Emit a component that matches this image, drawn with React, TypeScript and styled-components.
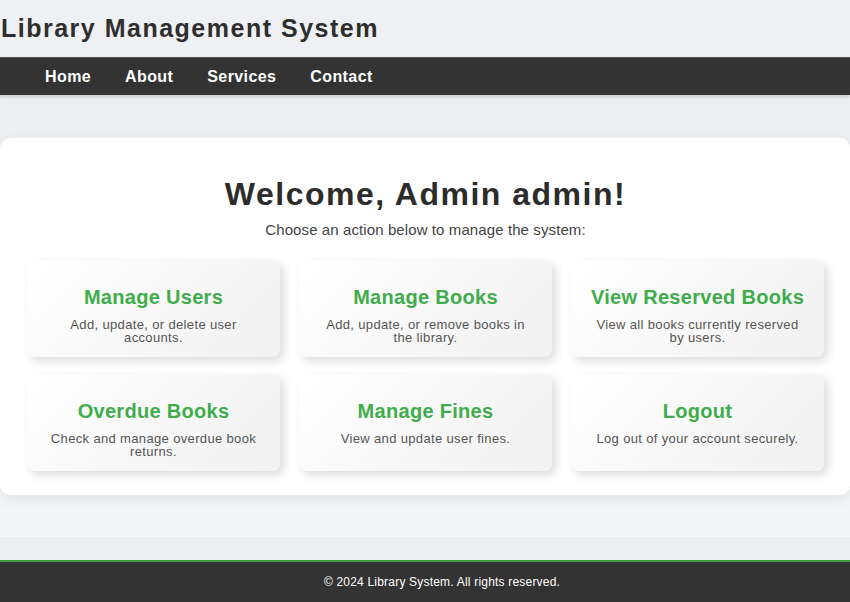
import React from "react";
import styled, { createGlobalStyle } from "styled-components";

const Global = createGlobalStyle`
  html, body { margin: 0; padding: 0; }
  body {
    font-family: "Liberation Sans", Arial, sans-serif;
    background: #eceef1;
    color: #333;
  }
`;

const Page = styled.div`
  display: flex;
  flex-direction: column;
  min-height: 602px;
`;

const Header = styled.header`
  background: #eef0f3;
`;

const SiteTitle = styled.h1`
  margin: 0;
  height: 57px;
  display: flex;
  align-items: center;
  font-size: 25px;
  letter-spacing: 1.5px;
  font-weight: 700;
  color: #2e2e2e;
  padding-left: 1px;
`;

const Nav = styled.nav`
  background: #333;
  height: 38px;
  border-top: 1px solid #555;
  box-sizing: border-box;
  display: flex;
  align-items: center;
  gap: 34px;
  padding-left: 45px;
  box-shadow: 0 2px 3px rgba(0, 0, 0, 0.15);
  position: relative;
  z-index: 1;
`;

const NavLink = styled.a`
  color: #fff;
  font-weight: 700;
  font-size: 16px;
  letter-spacing: 0.4px;
  text-decoration: none;
`;

const Main = styled.main`
  background: linear-gradient(to bottom, #eceef1, #f4f5f7);
  padding: 43px 0 42px;
`;

const Panel = styled.section`
  background: #fff;
  border-radius: 10px;
  box-shadow: 0 4px 14px rgba(0, 0, 0, 0.08);
  padding: 37px 26px 24px 27px;
  text-align: center;
`;

const Welcome = styled.h2`
  margin: 0;
  font-size: 32px;
  line-height: 38px;
  letter-spacing: 1.5px;
  font-weight: 700;
  color: #2c2c2c;
`;

const Intro = styled.p`
  margin: 8px 0 22px;
  font-size: 15px;
  letter-spacing: 0.1px;
  line-height: 17px;
  color: #444;
`;

const Grid = styled.div`
  display: grid;
  grid-template-columns: repeat(3, 1fr);
  gap: 17px 19px;
`;

const Card = styled.a`
  display: block;
  text-decoration: none;
  background: linear-gradient(135deg, #ffffff 0%, #f1f1f1 100%);
  border-radius: 8px;
  box-shadow: 4px 4px 10px rgba(0, 0, 0, 0.14);
  padding: 25px 16px 12px;
  min-height: 97px;
  box-sizing: border-box;
`;

const CardTitle = styled.h3`
  margin: 0 0 9px;
  font-size: 20px;
  letter-spacing: 0.3px;
  line-height: 24px;
  font-weight: 700;
  color: #3fad4b;
`;

const CardText = styled.p`
  margin: 0 auto;
  max-width: 212px;
  font-size: 13px;
  letter-spacing: 0.35px;
  line-height: 13px;
  color: #555;
`;

const Spacer = styled.div`
  flex: 1;
  min-height: 22px;
  background: #eceef1;
`;

const Footer = styled.footer`
  background: #333;
  border-top: 2px solid #3c9a42;
  height: 42px;
  display: flex;
  align-items: center;
  justify-content: center;
  color: #fff;
  font-size: 12px;
  letter-spacing: 0.2px;
  padding: 0 0 1px 34px;
  box-sizing: border-box;
`;

const actions = [
  { title: "Manage Users", text: "Add, update, or delete user accounts." },
  { title: "Manage Books", text: "Add, update, or remove books in the library." },
  { title: "View Reserved Books", text: "View all books currently reserved by users." },
  { title: "Overdue Books", text: "Check and manage overdue book returns." },
  { title: "Manage Fines", text: "View and update user fines." },
  { title: "Logout", text: "Log out of your account securely." },
];

export default function App() {
  return (
    <Page>
      <Global />
      <Header>
        <SiteTitle>Library Management System</SiteTitle>
        <Nav>
          <NavLink href="#">Home</NavLink>
          <NavLink href="#">About</NavLink>
          <NavLink href="#">Services</NavLink>
          <NavLink href="#">Contact</NavLink>
        </Nav>
      </Header>
      <Main>
        <Panel>
          <Welcome>Welcome, Admin admin!</Welcome>
          <Intro>Choose an action below to manage the system:</Intro>
          <Grid>
            {actions.map((a) => (
              <Card href="#" key={a.title}>
                <CardTitle>{a.title}</CardTitle>
                <CardText>{a.text}</CardText>
              </Card>
            ))}
          </Grid>
        </Panel>
      </Main>
      <Spacer />
      <Footer>© 2024 Library System. All rights reserved.</Footer>
    </Page>
  );
}
